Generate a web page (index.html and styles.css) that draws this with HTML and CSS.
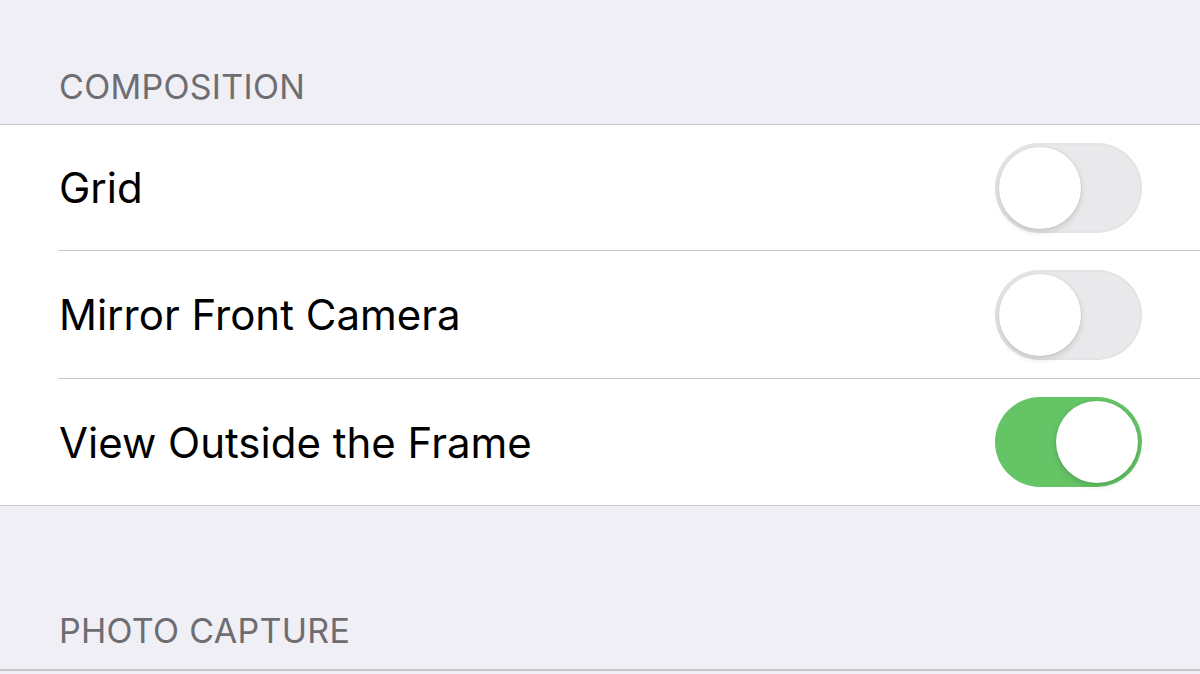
FILE: index.html
```html
<!DOCTYPE html>
<html lang="en">
<head>
    <meta charset="UTF-8">
    <meta name="viewport" content="width=device-width, initial-scale=1.0">
    <title>Camera Settings</title>
    <link rel="stylesheet" href="styles.css">
</head>
<body>
    <div class="section-title">COMPOSITION</div>
    <ul class="group">
        <li class="row">
            <span class="row-label">Grid</span>
            <span class="switch"><span class="knob"></span></span>
        </li>
        <li class="row">
            <span class="row-label">Mirror Front Camera</span>
            <span class="switch"><span class="knob"></span></span>
        </li>
        <li class="row">
            <span class="row-label">View Outside the Frame</span>
            <span class="switch on"><span class="knob"></span></span>
        </li>
    </ul>

    <div class="section-title second">PHOTO CAPTURE</div>
    <ul class="group"></ul>
</body>
</html>
```

FILE: styles.css
```css
body {
    margin: 0;
    background-color: #f0eff5;
    font-family: Inter, "Noto Sans", sans-serif;
    overflow: hidden;
}

.section-title {
    height: 124px;
    box-sizing: border-box;
    padding: 66px 0 0 59px;
    font-size: 34px;
    color: #6d6d72;
    letter-spacing: 0.3px;
}

.section-title.second {
    height: 163px;
    padding-top: 104px;
}

.group {
    list-style-type: none;
    margin: 0;
    padding: 0 0 0 58px;
    background-color: white;
    border-top: 1px solid #c8c7cc;
    border-bottom: 1px solid #c8c7cc;
}

.row {
    display: flex;
    align-items: center;
    justify-content: space-between;
    height: 127px;
    padding-right: 58px;
    border-bottom: 1px solid #c8c7cc;
}

.row:first-child {
    height: 125px;
}

.row:last-child {
    height: 126px;
    border-bottom: none;
}

.row-label {
    padding-left: 1px;
    font-size: 42px;
    color: #000;
}

.switch {
    display: flex;
    align-items: center;
    width: 147px;
    height: 90px;
    box-sizing: border-box;
    border-radius: 45px;
    background-color: #e9e9eb;
    box-shadow: inset 0 0 0 2px #e4e4e6;
    padding: 0 4px;
}

.switch.on {
    background-color: #65c466;
    box-shadow: none;
    justify-content: flex-end;
}

.knob {
    width: 82px;
    height: 82px;
    border-radius: 50%;
    background-color: white;
    box-shadow: 0 3px 6px rgba(0, 0, 0, 0.15), 0 0 0 1px rgba(0, 0, 0, 0.04);
}
```
